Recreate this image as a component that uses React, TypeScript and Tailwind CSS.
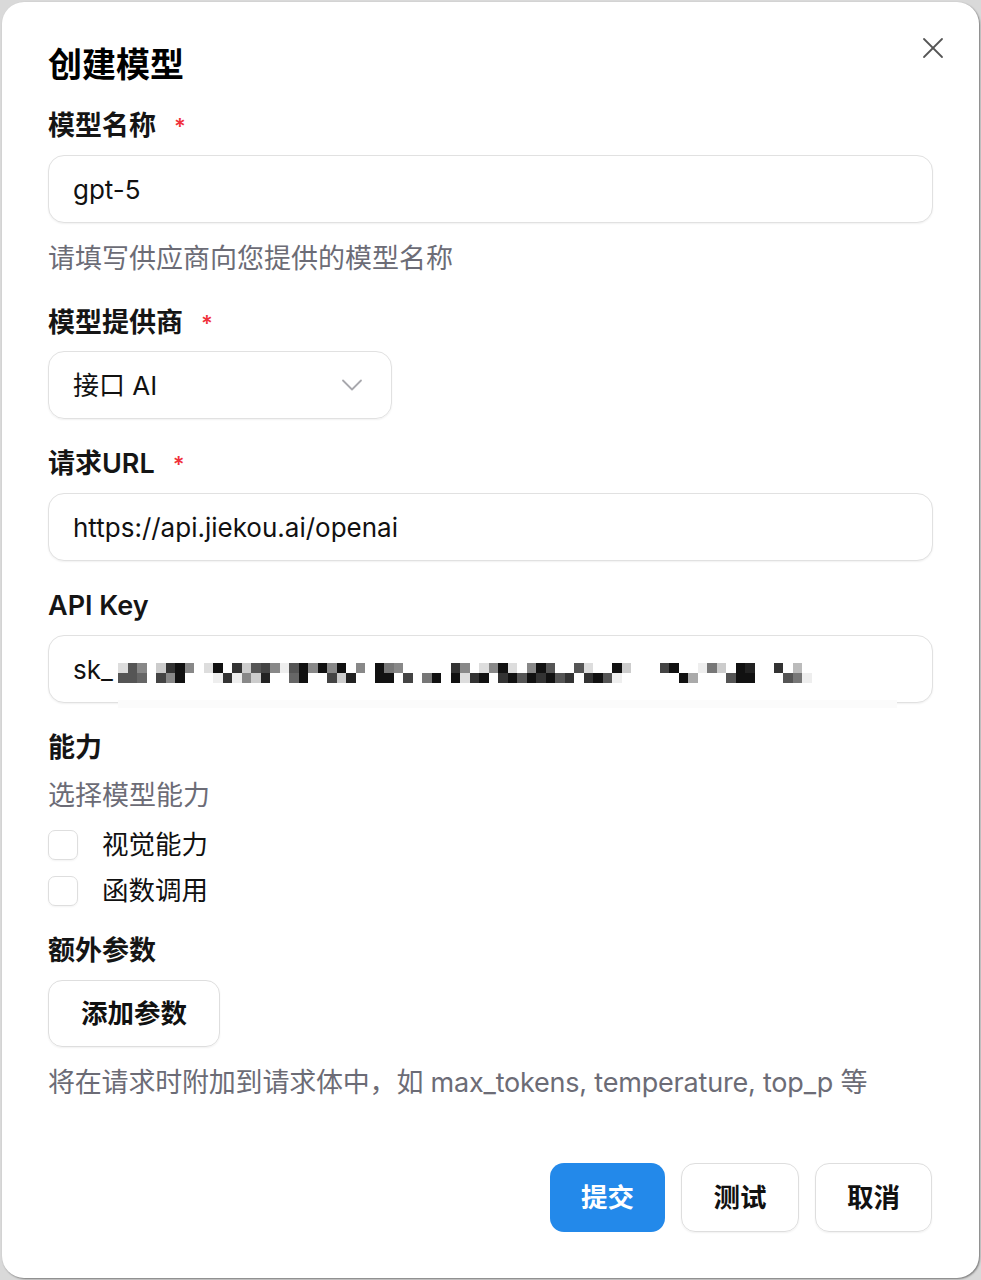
import { X, ChevronDown } from "lucide-react";

const row1 = "d58fc318fd1f3c548e518181f8f178fffff38fd81df815ff5dff1cfff41ffe7cf12ff3fb";
const row2 = "556f481fffe3e8c2ff61ff4c2ff11f4f71f1d31f31513153f315effffff1afff511fff57ef";

const Mosaic = () => (
    <div className="absolute left-[69px] top-[27px] flex flex-col">
        {[row1, row2].map((r, i) => (
            <div key={i} className="flex">
                {r.split("").map((c, j) => {
                    const v = parseInt(c, 16) * 17;
                    return <div key={j} className="w-[9.5px] h-[10px]" style={{ background: `rgb(${v},${v},${v})` }} />;
                })}
            </div>
        ))}
    </div>
);

const Label = ({ text, required }: { text: string; required?: boolean }) => (
    <div className="flex items-center h-[36px] text-[27px] font-semibold text-[#151515] leading-[36px]">
        {text}
        {required && <span className="ml-[18px] text-[22px] text-[#f0313a]">*</span>}
    </div>
);

const Input = ({ value, children }: { value: string; children?: React.ReactNode }) => (
    <div className="relative h-[68px] rounded-[16px] border border-[#e1e1e1] bg-white shadow-[0_1px_2px_rgba(0,0,0,0.06)] flex items-center pl-[24px] text-[26px] text-[#111]">
        {value}
        {children}
    </div>
);

const Help = ({ text, tight }: { text: string; tight?: boolean }) => (
    <div className={tight ? "h-[36px] leading-[36px] text-[27px] text-[#6c6c76] tracking-[-0.2px]" : "h-[36px] leading-[36px] text-[27px] text-[#6c6c76]"}>{text}</div>
);

const Check = ({ text }: { text: string }) => (
    <div className="flex items-center h-[36px] gap-[24px]">
        <div className="w-[30px] h-[30px] rounded-[7px] border border-[#dedede] shadow-[0_1px_2px_rgba(0,0,0,0.05)]" />
        <span className="text-[26.5px] text-[#111]">{text}</span>
    </div>
);

const App: React.FC = () => {
    return (
        <div className="w-[981px] h-[1280px] bg-[#d9d9d9] pl-[2px] pt-[2px] pr-[2px] pb-[2px] font-['Inter','Noto_Sans_CJK_SC',sans-serif]">
            <div className="relative h-full rounded-[22px] bg-white px-[46px] pt-[41px] flex flex-col shadow-[1px_1px_2px_rgba(0,0,0,0.45)]">
                <button className="absolute left-[913px] top-[28px] text-[#555]">
                    <X size={36} strokeWidth={1.2} />
                </button>

                <h2 className="h-[44px] leading-[44px] text-[34px] font-bold text-black">创建模型</h2>

                <div className="mt-[21px]"><Label text="模型名称" required /></div>
                <div className="mt-[11px]"><Input value="gpt-5" /></div>
                <div className="mt-[18px]"><Help text="请填写供应商向您提供的模型名称" /></div>

                <div className="mt-[28px]"><Label text="模型提供商" required /></div>
                <div className="mt-[10px] w-[344px] h-[68px] rounded-[16px] border border-[#e1e1e1] shadow-[0_1px_2px_rgba(0,0,0,0.06)] flex items-center justify-between pl-[24px] pr-[21px] text-[26px] text-[#111]">
                    <span>接口 AI</span>
                    <ChevronDown size={36} strokeWidth={1.2} className="text-[#a8a8ad]" />
                </div>

                <div className="mt-[27px]"><Label text="请求URL" required /></div>
                <div className="mt-[11px]"><Input value="https://api.jiekou.ai/openai" /></div>

                <div className="mt-[27px]"><Label text="API Key" /></div>
                <div className="mt-[11px]">
                    <Input value="sk_">
                        <Mosaic />
                        <div className="absolute left-[69px] right-[35px] bottom-[-6px] h-[8px] bg-[#fbfbfb]" />
                    </Input>
                </div>

                <div className="mt-[27px]"><Label text="能力" /></div>
                <div className="mt-[12px]"><Help text="选择模型能力" /></div>
                <div className="mt-[13px]"><Check text="视觉能力" /></div>
                <div className="mt-[10px]"><Check text="函数调用" /></div>

                <div className="mt-[24px]"><Label text="额外参数" /></div>
                <div className="mt-[11px]">
                    <button className="w-[172px] h-[67px] rounded-[14px] border border-[#dedede] shadow-[0_1px_2px_rgba(0,0,0,0.06)] text-[26.5px] font-semibold text-[#111]">
                        添加参数
                    </button>
                </div>
                <div className="mt-[18px]"><Help tight text="将在请求时附加到请求体中，如 max_tokens, temperature, top_p 等" /></div>

                <div className="mt-[62px] flex justify-end gap-[16px] pr-[1px]">
                    <button className="w-[115px] h-[69px] rounded-[14px] bg-[#2389ea] text-white text-[26.5px] font-semibold">提交</button>
                    <button className="w-[118px] h-[69px] rounded-[14px] border border-[#dedede] shadow-[0_1px_2px_rgba(0,0,0,0.06)] text-[26.5px] font-semibold text-[#111]">测试</button>
                    <button className="w-[117px] h-[69px] rounded-[14px] border border-[#dedede] shadow-[0_1px_2px_rgba(0,0,0,0.06)] text-[26.5px] font-semibold text-[#111]">取消</button>
                </div>
            </div>
        </div>
    );
};

export default App;
